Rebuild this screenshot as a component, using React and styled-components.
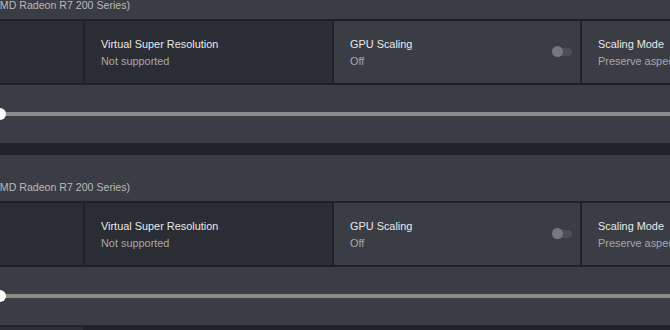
import React from 'react';
import styled, { createGlobalStyle } from 'styled-components';

const GlobalStyle = createGlobalStyle`
  html, body {
    margin: 0;
    padding: 0;
    background: #1f2228;
    overflow: hidden;
    font-family: "Liberation Sans", Arial, sans-serif;
  }
`;

const Page = styled.div`
  width: 670px;
  height: 330px;
  display: flex;
  flex-direction: column;
  overflow: hidden;
`;

const Panel = styled.section`
  background: #3a3d44;
  display: flex;
  flex-direction: column;
  flex-shrink: 0;
`;

const Header = styled.div`
  height: ${(p) => p.height}px;
  display: flex;
  align-items: flex-end;
  padding-bottom: 7px;
  box-sizing: border-box;
`;

const HeaderText = styled.div`
  width: 130px;
  display: flex;
  justify-content: flex-end;
  white-space: nowrap;
  font-size: 10.6px;
  line-height: 13px;
  color: #b8babd;
`;

const CardRow = styled.div`
  display: grid;
  grid-template-columns: 83px 247px 246px 247px;
  column-gap: 2px;
  background: #1e2126;
  padding: 2px 0;
  height: 66px;
  box-sizing: border-box;
`;

const Card = styled.div`
  background: ${(p) => (p.dim ? '#2a2d33' : '#3a3d44')};
  display: flex;
  align-items: center;
  justify-content: space-between;
  padding: 2px 8px 0 16px;
  overflow: hidden;
`;

const Texts = styled.div`
  display: flex;
  flex-direction: column;
  white-space: nowrap;
`;

const Title = styled.div`
  font-size: 10.9px;
  line-height: 17px;
  color: #e8e9ea;
`;

const Value = styled.div`
  font-size: 10.9px;
  line-height: 17px;
  color: #a6a8ac;
`;

const Toggle = styled.div`
  position: relative;
  width: 20px;
  height: 12px;
  margin-top: -2px;
  display: flex;
  align-items: center;
  flex-shrink: 0;

  &::before {
    content: '';
    width: 17px;
    height: 8px;
    margin-left: 3px;
    border-radius: 4px;
    background: #4c4f55;
  }

  &::after {
    content: '';
    position: absolute;
    left: 0;
    top: 0;
    width: 11px;
    height: 11px;
    border-radius: 50%;
    background: #76787c;
  }
`;

const SliderArea = styled.div`
  height: 58px;
  display: flex;
  align-items: center;
  border-bottom: 1px solid #3e4148;
  box-sizing: border-box;
`;

const Track = styled.div`
  position: relative;
  flex: 1;
  height: 4px;
  background: #8b8b8b;
`;

const Knob = styled.div`
  position: absolute;
  left: 0;
  top: 50%;
  width: 12px;
  height: 12px;
  border-radius: 50%;
  background: #ffffff;
  transform: translate(-50%, -50%);
`;

const Gap = styled.div`
  height: 12px;
  flex-shrink: 0;
  display: flex;
`;

const Tab = styled.div`
  width: 83px;
  margin-top: 2px;
  background: #2c2f35;
`;

const cards = [
  { dim: true },
  { dim: true, title: 'Virtual Super Resolution', value: 'Not supported' },
  { title: 'GPU Scaling', value: 'Off', toggle: true },
  { title: 'Scaling Mode', value: 'Preserve aspect ratio' },
];

const DisplayPanel = ({ headerHeight }) => (
  <Panel>
    <Header height={headerHeight}>
      <HeaderText>Display 1 (AMD Radeon R7 200 Series)</HeaderText>
    </Header>
    <CardRow>
      {cards.map((c, i) => (
        <Card key={i} dim={c.dim}>
          {c.title && (
            <Texts>
              <Title>{c.title}</Title>
              <Value>{c.value}</Value>
            </Texts>
          )}
          {c.toggle && <Toggle />}
        </Card>
      ))}
    </CardRow>
    <SliderArea>
      <Track>
        <Knob />
      </Track>
    </SliderArea>
  </Panel>
);

export default function App() {
  return (
    <Page>
      <GlobalStyle />
      <DisplayPanel headerHeight={19} />
      <Gap />
      <DisplayPanel headerHeight={46} />
      <Gap>
        <Tab />
      </Gap>
    </Page>
  );
}
